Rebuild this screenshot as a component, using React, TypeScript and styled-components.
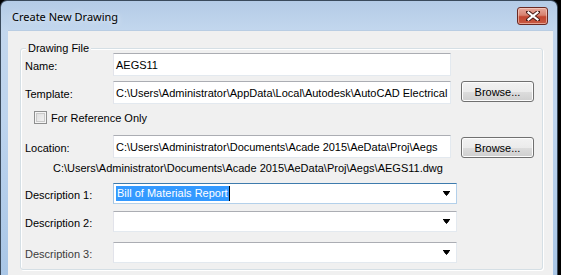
import React from "react";
import styled, { createGlobalStyle } from "styled-components";

const GlobalStyle = createGlobalStyle`
  html, body { margin: 0; padding: 0; background: #000; }
  body { font-family: "Liberation Sans", Arial, sans-serif; font-size: 11px; color: #000; overflow: hidden; }
  * { box-sizing: border-box; }
`;

const Window = styled.div`
  width: 558px;
  height: 275px;
  border: 1px solid #3a4a5c;
  border-bottom: none;
  border-radius: 7px 7px 0 0;
  background: linear-gradient(180deg, #b4cbe6 0px, #c3d7ee 30px, #bdd4ee 120px, #a9c6e6 275px);
  display: flex;
  flex-direction: column;
  padding: 0 4px 0 7px;
  overflow: hidden;
`;

const TitleBar = styled.div`
  height: 29px;
  flex: none;
  display: flex;
  align-items: center;
  justify-content: space-between;
  padding: 0 5px 0 4px;
`;

const Title = styled.span`
  font-family: "Noto Sans", "Open Sans", sans-serif;
  font-size: 11px;
  color: #000;
  text-shadow: 0 0 6px rgba(255, 255, 255, 0.9);
  margin-top: 1px;
`;

const CloseButton = styled.div`
  width: 31px;
  height: 18px;
  margin-top: 1px;
  border: 1px solid #6a2a24;
  border-radius: 3px;
  background: linear-gradient(180deg, #e6a99d 0%, #d7826f 45%, #c2452f 55%, #c75a44 100%);
  box-shadow: inset 0 0 0 1px rgba(255, 220, 210, 0.55);
  display: flex;
  align-items: center;
  justify-content: center;
`;

const Client = styled.div`
  flex: 1;
  min-height: 0;
  background: #f0f0f0;
  border-top: 1px solid #b9cde3;
  padding: 17px 10px 0 12px;
`;

const GroupBox = styled.div`
  position: relative;
  width: 523px;
  height: 222px;
  border: 1px solid #d5dfe5;
  border-radius: 3px;
  box-shadow: inset 1px 1px 0 #fff, 1px 1px 0 #fff;
  padding: 0 0 0 4px;
  display: flex;
  flex-direction: column;
`;

const Legend = styled.span`
  position: absolute;
  left: 5px;
  top: -8px;
  padding: 0 2px;
  background: #f0f0f0;
  line-height: 14px;
`;

const Row = styled.div<{ $top: number; $h: number; $indent?: number }>`
  display: flex;
  align-items: center;
  margin-top: ${(p) => p.$top}px;
  height: ${(p) => p.$h}px;
  flex: none;
  padding-left: ${(p) => p.$indent ?? 0}px;
`;

const Label = styled.span<{ $dim?: boolean }>`
  width: 88px;
  flex: none;
  color: ${(p) => (p.$dim ? "#3c3c3c" : "#000")};
  padding-top: 2px;
`;

const TextBox = styled.div`
  width: 338px;
  height: 23px;
  flex: none;
  background: #fff;
  border: 1px solid #e3e9ef;
  border-top-color: #abadb3;
  border-left-color: #e2e3ea;
  padding: 0 2px;
  display: flex;
  align-items: center;
  white-space: nowrap;
  overflow: hidden;
`;

const Button = styled.div<{ $offset: number }>`
  width: 73px;
  height: 21px;
  margin-left: 10px;
  align-self: flex-start;
  margin-top: ${(p) => p.$offset}px;
  border: 1px solid #707070;
  border-radius: 3px;
  background: linear-gradient(180deg, #f2f2f2 0%, #ebebeb 50%, #dddddd 51%, #cfcfcf 100%);
  box-shadow: inset 0 0 0 1px #fcfcfc;
  display: flex;
  align-items: center;
  justify-content: center;
`;

const CheckBox = styled.div`
  width: 13px;
  height: 13px;
  border: 1px solid #8e8f8f;
  background: linear-gradient(135deg, #dcdcdc 0%, #f4f4f4 100%);
  box-shadow: inset 0 0 0 1px #f4f4f4, inset 0 0 0 2px #c9c9c9;
  margin-right: 4px;
`;

const PathText = styled.span`
  padding-left: 28px;
  white-space: nowrap;
`;

const Combo = styled.div<{ $focused?: boolean }>`
  width: 344px;
  height: 21px;
  background: #fff;
  border: 1px solid ${(p) => (p.$focused ? "#b3d0ea" : "#e3e9ef")};
  border-top-color: ${(p) => (p.$focused ? "#3d7bad" : "#abadb3")};
  border-left-color: ${(p) => (p.$focused ? "#a4c5e4" : "#e2e3ea")};
  display: flex;
  align-items: center;
  padding: 0 6px 0 2px;
`;

const ComboText = styled.span`
  flex: 1;
  display: flex;
  align-items: center;
`;

const Selected = styled.span`
  background: #3399ff;
  color: #fff;
  line-height: 15px;
  padding: 0 1px 0 1px;
`;

const Caret = styled.span`
  width: 1px;
  height: 15px;
  background: #000;
`;

const Arrow = () => (
  <svg width="7" height="5" viewBox="0 0 7 5">
    <path d="M0 0.5 H7 M1 1.5 H6 L3.5 4.5 Z" stroke="#000" strokeWidth="1" fill="#000" />
  </svg>
);

const CloseX = () => (
  <svg width="14" height="10" viewBox="0 0 14 10">
    <path d="M2 1 L12 9 M12 1 L2 9" stroke="#4a1f1a" strokeWidth="4" strokeLinecap="square" />
    <path d="M2.5 1.5 L11.5 8.5 M11.5 1.5 L2.5 8.5" stroke="#fff" strokeWidth="2.2" strokeLinecap="square" />
  </svg>
);

export default function App() {
  return (
    <>
      <GlobalStyle />
      <Window>
        <TitleBar>
          <Title>Create New Drawing</Title>
          <CloseButton>
            <CloseX />
          </CloseButton>
        </TitleBar>
        <Client>
          <GroupBox>
            <Legend>Drawing File</Legend>
            <Row $top={4} $h={23}>
              <Label>Name:</Label>
              <TextBox>AEGS11</TextBox>
            </Row>
            <Row $top={5} $h={23}>
              <Label>Template:</Label>
              <TextBox>C:\Users\Administrator\AppData\Local\Autodesk\AutoCAD Electrical</TextBox>
              <Button $offset={0}>Browse...</Button>
            </Row>
            <Row $top={7} $h={13} $indent={9}>
              <CheckBox />
              <span>For Reference Only</span>
            </Row>
            <Row $top={11} $h={23}>
              <Label>Location:</Label>
              <TextBox>C:\Users\Administrator\Documents\Acade 2015\AeData\Proj\Aegs</TextBox>
              <Button $offset={2}>Browse...</Button>
            </Row>
            <Row $top={3} $h={14}>
              <PathText>C:\Users\Administrator\Documents\Acade 2015\AeData\Proj\Aegs\AEGS11.dwg</PathText>
            </Row>
            <Row $top={8} $h={21}>
              <Label>Description 1:</Label>
              <Combo $focused>
                <ComboText>
                  <Selected>Bill of Materials Report</Selected>
                  <Caret />
                </ComboText>
                <Arrow />
              </Combo>
            </Row>
            <Row $top={7} $h={21}>
              <Label>Description 2:</Label>
              <Combo>
                <ComboText />
                <Arrow />
              </Combo>
            </Row>
            <Row $top={10} $h={21}>
              <Label $dim>Description 3:</Label>
              <Combo>
                <ComboText />
                <Arrow />
              </Combo>
            </Row>
          </GroupBox>
        </Client>
      </Window>
    </>
  );
}
